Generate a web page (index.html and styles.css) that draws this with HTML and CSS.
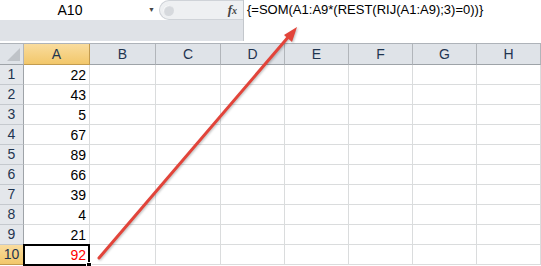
FILE: index.html
```html
<!DOCTYPE html>
<html lang="nl">
<head>
  <meta charset="UTF-8">
  <title>Matrixformule SOM / REST / RIJ</title>
  <link rel="stylesheet" href="styles.css">
</head>
<body>
  <div class="window">

    <!-- FORMULA BAR -->
    <div class="formula-bar">
      <div class="left-panel">
        <div class="top-strip">
          <div class="name-box">A10</div>
          <div class="name-drop">&#9660;</div>
          <div class="splitter">
            <span class="knob"></span>
            <span class="fx">f<i>x</i></span>
          </div>
        </div>
      </div>
      <div class="formula-input">{=SOM(A1:A9*(REST(RIJ(A1:A9);3)=0))}</div>
    </div>
    <div class="bar-gap"></div>

    <!-- SHEET -->
    <div class="sheet">
      <div class="corner"></div>
      <div class="col-head active">A</div>
      <div class="col-head">B</div>
      <div class="col-head">C</div>
      <div class="col-head">D</div>
      <div class="col-head">E</div>
      <div class="col-head">F</div>
      <div class="col-head">G</div>
      <div class="col-head">H</div>

      <div class="row-head">1</div><div class="cell num">22</div><div class="cell"></div><div class="cell"></div><div class="cell"></div><div class="cell"></div><div class="cell"></div><div class="cell"></div><div class="cell"></div>
      <div class="row-head">2</div><div class="cell num">43</div><div class="cell"></div><div class="cell"></div><div class="cell"></div><div class="cell"></div><div class="cell"></div><div class="cell"></div><div class="cell"></div>
      <div class="row-head">3</div><div class="cell num">5</div><div class="cell"></div><div class="cell"></div><div class="cell"></div><div class="cell"></div><div class="cell"></div><div class="cell"></div><div class="cell"></div>
      <div class="row-head">4</div><div class="cell num">67</div><div class="cell"></div><div class="cell"></div><div class="cell"></div><div class="cell"></div><div class="cell"></div><div class="cell"></div><div class="cell"></div>
      <div class="row-head">5</div><div class="cell num">89</div><div class="cell"></div><div class="cell"></div><div class="cell"></div><div class="cell"></div><div class="cell"></div><div class="cell"></div><div class="cell"></div>
      <div class="row-head">6</div><div class="cell num">66</div><div class="cell"></div><div class="cell"></div><div class="cell"></div><div class="cell"></div><div class="cell"></div><div class="cell"></div><div class="cell"></div>
      <div class="row-head">7</div><div class="cell num">39</div><div class="cell"></div><div class="cell"></div><div class="cell"></div><div class="cell"></div><div class="cell"></div><div class="cell"></div><div class="cell"></div>
      <div class="row-head">8</div><div class="cell num">4</div><div class="cell"></div><div class="cell"></div><div class="cell"></div><div class="cell"></div><div class="cell"></div><div class="cell"></div><div class="cell"></div>
      <div class="row-head">9</div><div class="cell num">21</div><div class="cell"></div><div class="cell"></div><div class="cell"></div><div class="cell"></div><div class="cell"></div><div class="cell"></div><div class="cell"></div>
      <div class="row-head active">10</div><div class="cell num selected">92<span class="handle"></span></div><div class="cell"></div><div class="cell"></div><div class="cell"></div><div class="cell"></div><div class="cell"></div><div class="cell"></div><div class="cell"></div>
    </div>

    <!-- annotation arrow over the sheet -->
    <svg class="arrow" width="541" height="266" viewBox="0 0 541 266">
      <line x1="99" y1="258" x2="290" y2="35" stroke="#e2443a" stroke-width="3" stroke-linecap="round"/>
      <polygon points="297,27 284,35 292,42" fill="#e2443a"/>
    </svg>
  </div>
</body>
</html>
```

FILE: styles.css
```css
/* ---------- BASE ---------- */
* {
  margin: 0;
  padding: 0;
  box-sizing: border-box;
}
body {
  background: #ffffff;
  font-family: 'Liberation Sans', Arial, sans-serif;
  font-size: 13px;
  color: #000;
  overflow: hidden;
}
.window {
  position: relative;
  width: 541px;
  height: 266px;
  overflow: hidden;
}

/* ---------- FORMULA BAR ---------- */
.formula-bar {
  display: flex;
  height: 41px;
}
.left-panel {
  width: 244px;
  background: #dfe2e7;
  border-right: 1px solid #c3c7cc;
}
.top-strip {
  display: flex;
  height: 20px;
  background: #ffffff;
}
.name-box {
  width: 144px;
  padding-right: 4px;
  text-align: center;
  line-height: 20px;
  font-size: 14px;
}
.name-drop {
  width: 15px;
  font-size: 7px;
  line-height: 20px;
  text-align: center;
  color: #444;
}
.splitter {
  flex: 1;
  display: flex;
  align-items: center;
  justify-content: space-between;
  background: #eef0f2;
  border: 1px solid #cfd3d8;
  border-right: none;
  border-radius: 10px 0 0 10px;
  padding: 0 6px 0 3px;
}
.knob {
  width: 11px;
  height: 11px;
  border-radius: 50%;
  background: #d6d9dd;
  box-shadow: inset 1px 1px 1px #f8f9fa;
}
.fx {
  font-family: 'Liberation Serif', 'Times New Roman', serif;
  font-style: italic;
  font-weight: bold;
  font-size: 13px;
  color: #444;
}
.fx i {
  font-size: 10px;
}
.formula-input {
  flex: 1;
  padding: 2px 0 0 3px;
  font-size: 13px;
  line-height: 16px;
  white-space: nowrap;
}
.bar-gap {
  height: 3px;
  background: #ffffff;
  border-bottom: 1px solid #aeb3b9;
}

/* ---------- SHEET ---------- */
.sheet {
  display: grid;
  grid-template-columns: 24px 66px 66px 65px repeat(5, 64px);
  grid-template-rows: 21px repeat(10, 20px);
}
.corner {
  position: relative;
  background: #dfe3e8;
  border-right: 1px solid #b1b5ba;
  border-bottom: 1px solid #9ea3a8;
}
.corner::after {
  content: "";
  position: absolute;
  right: 3px;
  bottom: 3px;
  border-left: 13px solid transparent;
  border-bottom: 13px solid #bfc3c8;
}
.col-head {
  background: #dfe3e8;
  border-right: 1px solid #b1b5ba;
  border-bottom: 1px solid #9ea3a8;
  text-align: center;
  line-height: 20px;
  font-size: 14px;
  color: #1f3550;
}
.col-head.active,
.row-head.active {
  background: linear-gradient(#f9dc9e, #f2c76a);
  border-color: #c29b4f;
}
.row-head {
  background: #e4e7eb;
  border-right: 1px solid #9ea3a8;
  border-bottom: 1px solid #c5c9ce;
  text-align: center;
  line-height: 19px;
  font-size: 14px;
  color: #1f3550;
}
.cell {
  border-right: 1px solid #dadcdd;
  border-bottom: 1px solid #dadcdd;
}
.num {
  text-align: right;
  padding-right: 3px;
  line-height: 20px;
  font-size: 14px;
}
.selected {
  position: relative;
  color: #ff0000;
  border: 2px solid #000;
  margin: -1px 0 -1px -1px;
  line-height: 18px;
  padding-right: 2px;
}
.handle {
  position: absolute;
  right: -4px;
  bottom: -4px;
  width: 6px;
  height: 6px;
  background: #000;
  border: 1px solid #fff;
}

/* ---------- ANNOTATION ---------- */
.arrow {
  position: absolute;
  left: 0;
  top: 0;
  pointer-events: none;
  filter: drop-shadow(1px 1px 1px rgba(0,0,0,0.25));
}
```
